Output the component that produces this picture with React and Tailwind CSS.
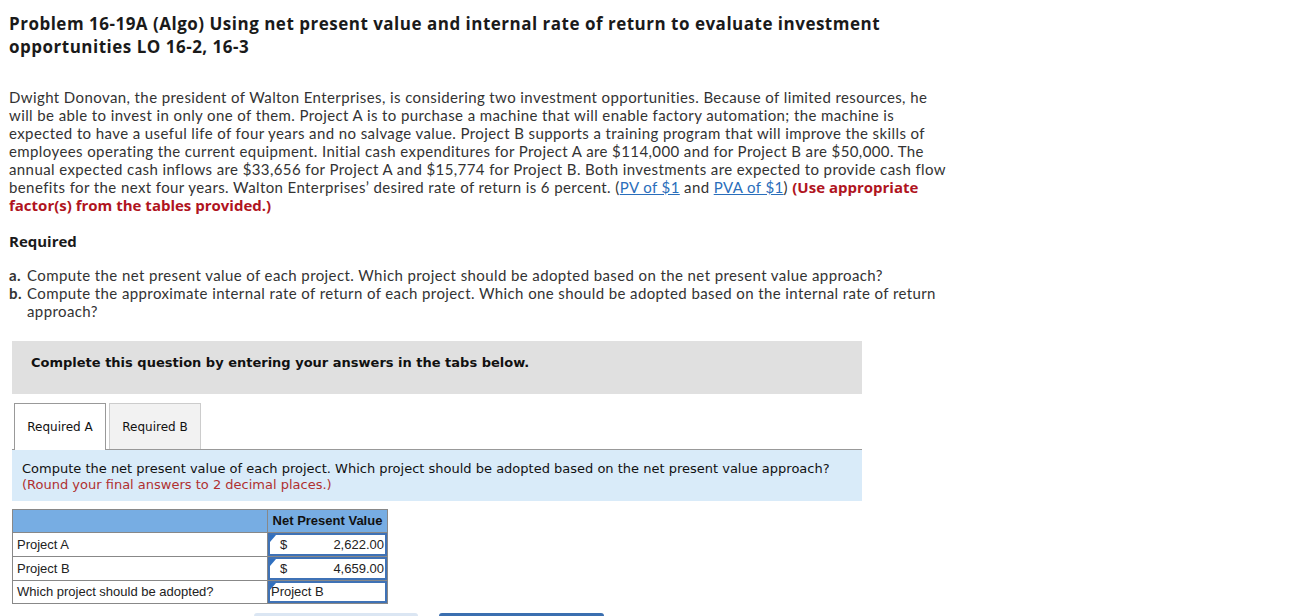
import React from "react";

const rows = [
  { label: "Project A", value: "2,622.00" },
  { label: "Project B", value: "4,659.00" },
];

function Marker() {
  return (
    <span className="absolute left-0 top-0 w-0 h-0 border-t-[7px] border-t-[#2f6fc0] border-r-[6px] border-r-transparent" />
  );
}

export default function App() {
  return (
    <div className="min-h-screen bg-white text-[#333] overflow-hidden">
      <div className="w-[950px] pl-[9px] pt-[12px]">
        <h1 className="font-['Open_Sans',sans-serif] font-bold text-[17px] leading-[23px] tracking-[0.5px] text-[#1a1a1a]">
          Problem 16-19A (Algo) Using net present value and internal rate of return to evaluate investment opportunities LO 16-2, 16-3
        </h1>

        <p className="mt-[30px] font-['Lato',sans-serif] text-[15px] leading-[18px] tracking-[0.4px] text-[#333]">
          Dwight Donovan, the president of Walton Enterprises, is considering two investment opportunities. Because of limited resources, he will be able to invest in only one of them. Project A is to purchase a machine that will enable factory automation; the machine is expected to have a useful life of four years and no salvage value. Project B supports a training program that will improve the skills of employees operating the current equipment. Initial cash expenditures for Project A are $114,000 and for Project B are $50,000. The annual expected cash inflows are $33,656 for Project A and $15,774 for Project B. Both investments are expected to provide cash flow benefits for the next four years. Walton Enterprises’ desired rate of return is 6 percent.{" "}
          <span>
            (<a className="text-[#2a6ebb] underline">PV of $1</a> and <a className="text-[#2a6ebb] underline">PVA of $1</a>)
          </span>{" "}
          <span className="font-['Open_Sans',sans-serif] font-bold tracking-normal text-[#b0141e]">(Use appropriate factor(s) from the tables provided.)</span>
        </p>

        <h2 className="mt-[18px] font-['Open_Sans',sans-serif] font-bold text-[15px] leading-[18px] text-[#1a1a1a]">Required</h2>

        <ul className="mt-[16px] font-['Lato',sans-serif] text-[15px] leading-[18px] tracking-[0.4px] text-[#333]">
          <li className="flex">
            <span className="font-bold w-[18px] shrink-0">a.</span>
            <span>Compute the net present value of each project. Which project should be adopted based on the net present value approach?</span>
          </li>
          <li className="flex">
            <span className="font-bold w-[18px] shrink-0">b.</span>
            <span>Compute the approximate internal rate of return of each project. Which one should be adopted based on the internal rate of return approach?</span>
          </li>
        </ul>
      </div>

      <div className="ml-[12px] w-[850px] mt-[21px] font-['DejaVu_Sans',Verdana,sans-serif]">
        <div className="bg-[#e0e0e0] h-[53px] pt-[14px] pl-[19px]">
          <span className="block font-bold text-[13px] leading-[16px] text-[#111]">Complete this question by entering your answers in the tabs below.</span>
        </div>

        <div className="mt-[8px] flex items-end gap-[3px] pl-[2px] h-[47px]">
          <div className="h-[47px] w-[92px] bg-white border border-[#999] border-b-0 flex items-center justify-center text-[12px] text-[#111] relative top-[1px]">
            Required A
          </div>
          <div className="h-[46px] w-[92px] bg-[#f2f2f2] border border-[#ccc] border-b-0 flex items-center justify-center text-[12px] text-[#111]">
            Required B
          </div>
        </div>

        <div className="border-t border-[#999] bg-[#d9ebf9] h-[52px] pl-[10px] pt-[11px] text-[13px] leading-[16px]">
          <div className="text-[#111]">
            Compute the net present value of each project. Which project should be adopted based on the net present value approach?
          </div>
          <div className="text-[#b03030]">(Round your final answers to 2 decimal places.)</div>
        </div>

        <table className="mt-[8px] border-collapse font-['Liberation_Sans',Arial,sans-serif] text-[13px] text-[#222]">
          <thead>
            <tr className="bg-[#77ade3] h-[23px]">
              <th className="w-[255px] border border-[#888]"></th>
              <th className="w-[120px] border border-[#888] font-bold text-[13px] text-[#111] text-center">Net Present Value</th>
            </tr>
          </thead>
          <tbody>
            {rows.map((r) => (
              <tr key={r.label} className="h-[24px]">
                <td className="border border-[#888] pl-[4px] text-left">{r.label}</td>
                <td className="border border-[#888] p-0">
                  <div className="relative h-[23px] border-2 border-[#3f72b6] flex items-center justify-between pl-[10px] pr-[1px] bg-white">
                    <Marker />
                    <span>$</span>
                    <span>{r.value}</span>
                  </div>
                </td>
              </tr>
            ))}
            <tr className="h-[23px]">
              <td className="border border-[#888] pl-[4px] text-left">Which project should be adopted?</td>
              <td className="border border-[#888] p-0">
                <div className="relative h-[22px] border-2 border-[#3f72b6] flex items-center pl-[1px] bg-white">
                  <Marker />
                  <span>Project B</span>
                </div>
              </td>
            </tr>
          </tbody>
        </table>

        <div className="mt-[9px] flex gap-[21px] pl-[242px]">
          <div className="w-[164px] h-[20px] bg-[#dbe6f3] rounded-[3px]" />
          <div className="w-[165px] h-[20px] bg-[#3b6fb0] rounded-[3px]" />
        </div>
      </div>
    </div>
  );
}
